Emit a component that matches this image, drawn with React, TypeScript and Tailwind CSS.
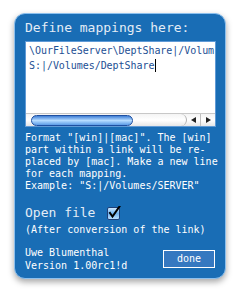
import React from 'react';

const mono = { fontFamily: '"DejaVu Sans Mono", "Liberation Mono", monospace' };

function Checkbox() {
    return (
        <svg width="14" height="14" viewBox="0 0 14 14" className="ml-[12px]">
            <defs>
                <linearGradient id="cb" x1="0" y1="0" x2="0" y2="1">
                    <stop offset="0" stopColor="#d6ecff" />
                    <stop offset="0.5" stopColor="#6fb2f0" />
                    <stop offset="1" stopColor="#bfe2ff" />
                </linearGradient>
            </defs>
            <rect x="0.5" y="1.5" width="12" height="12" rx="1.5" fill="url(#cb)" stroke="#1d3f78" />
            <path d="M3 7 L5.5 10.5 L12.5 0.5" fill="none" stroke="#000" strokeWidth="2" strokeLinecap="square" />
        </svg>
    );
}

function Scrollbar() {
    return (
        <div className="flex h-[13px] shrink-0 items-center border-t border-[#c8c8c8] bg-gradient-to-b from-[#f4f4f4] via-[#ffffff] to-[#e6e6e6]">
            <div className="ml-[5px] h-[11px] w-[102px] rounded-full border border-[#1f4fa0] bg-gradient-to-b from-[#3f7fd6] via-[#b6dcff] to-[#5b9be6]" />
            <div className="ml-auto flex h-full items-center">
                <div className="h-full w-[8px] rounded-r-full border-r border-[#b0b0b0]" />
                <div className="flex h-full w-[14px] items-center justify-center border-r border-[#c0c0c0]">
                    <div className="h-0 w-0 border-y-[3.5px] border-r-[5px] border-y-transparent border-r-[#222]" />
                </div>
                <div className="flex h-full w-[14px] items-center justify-center">
                    <div className="h-0 w-0 border-y-[3.5px] border-l-[5px] border-y-transparent border-l-[#222]" />
                </div>
            </div>
        </div>
    );
}

export default function App() {
    return (
        <div className="h-[295px] w-[240px] bg-white pl-[14px] pt-[13px]" style={mono}>
            <div className="h-[266px] w-[212px] rounded-[11px] border border-[#8cc0ee] bg-[#196db5] pl-[10px] pr-[9px] pt-[6px] shadow-[0_3px_6px_rgba(0,0,0,0.35)]">
                {/* Title */}
                <div className="text-[13px] leading-[16px] text-[#e3ecf6]">Define mappings here:</div>

                {/* Mappings box */}
                <div className="mt-[5px] flex h-[86px] w-[191px] flex-col border border-[#5f9ad6] bg-white">
                    <div className="flex-1 overflow-hidden whitespace-nowrap pl-[3px] pt-[1px] text-[10px] leading-[15px] tracking-[-0.05px] text-[#1d4f94]">
                        <div>\OurFileServer\DeptShare|/Volum</div>
                        <div className="flex items-center">
                            S:|/Volumes/DeptShare
                            <span className="ml-[1px] inline-block h-[13px] w-[1px] bg-black" />
                        </div>
                    </div>
                    <Scrollbar />
                </div>

                {/* Help text */}
                <div className="mt-[5px] whitespace-nowrap text-[10px] leading-[12px] text-white">
                    <div>Format "[win]|[mac]". The [win]</div>
                    <div>part within a link will be re-</div>
                    <div>placed by [mac]. Make a new line</div>
                    <div>for each mapping.</div>
                    <div>Example: "S:|/Volumes/SERVER"</div>
                </div>

                {/* Open file */}
                <div className="mt-[13px] flex items-center text-[13px] leading-[16px] text-[#e3ecf6]">
                    Open file
                    <Checkbox />
                </div>
                <div className="mt-[3px] text-[10px] leading-[12px] text-white">(After conversion of the link)</div>

                {/* Footer */}
                <div className="mt-[10px] flex items-start justify-between">
                    <div className="text-[10px] leading-[13px] text-white">
                        <div>Uwe Blumenthal</div>
                        <div>Version 1.00rc1!d</div>
                    </div>
                    <button className="mr-[1px] mt-[4px] h-[18px] w-[52px] border border-white bg-[#3578c0] text-[10px] leading-[14px] text-white">
                        done
                    </button>
                </div>
            </div>
        </div>
    );
}
